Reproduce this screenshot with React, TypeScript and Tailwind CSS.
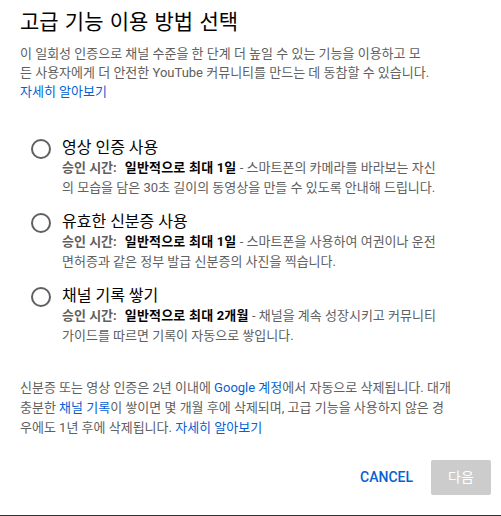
import React from "react";

const font = { fontFamily: 'Roboto, "Noto Sans CJK KR", sans-serif' };

function Radio() {
  return <div className="mt-[1px] h-[20px] w-[20px] shrink-0 rounded-full border-2 border-[#606060]" />;
}

function Option({ title, time, lines }: { title: string; time: string; lines: string[] }) {
  return (
    <div className="flex">
      <Radio />
      <div className="ml-[11px]">
        <div className="whitespace-nowrap text-[16px] leading-[20px] text-[#030303]">{title}</div>
        <div className="whitespace-nowrap text-[13px] leading-[20px] text-[#606060]">
          <span className="font-bold">승인 시간:</span>
          <span className="ml-[8px] font-bold text-[#030303] [letter-spacing:0.2px]">{time}</span> {lines[0]}
          <br />
          {lines[1]}
        </div>
      </div>
    </div>
  );
}

export default function App() {
  return (
    <div className="h-[516px] w-[501px] bg-[#303030]" style={font}>
      <div className="flex h-[515px] w-[501px] flex-col bg-white">
        <div className="px-5 pt-[9px]">
          <h1 className="whitespace-nowrap text-[21px] font-normal leading-[26px] text-[#030303] [word-spacing:1px]">
            고급 기능 이용 방법 선택
          </h1>
          <p className="mt-[9px] whitespace-nowrap text-[13px] leading-[19px] text-[#606060]">
            이 일회성 인증으로 채널 수준을 한 단계 더 높일 수 있는 기능을 이용하고 모
            <br />
            든 사용자에게 더 안전한 YouTube 커뮤니티를 만드는 데 동참할 수 있습니다.
            <br />
            <span className="text-[#065fd4]">자세히 알아보기</span>
          </p>
        </div>
        <div className="mt-[37px] flex flex-col gap-[14px] pl-[31px]">
          <Option
            title="영상 인증 사용"
            time="일반적으로 최대 1일"
            lines={[
              "- 스마트폰의 카메라를 바라보는 자신",
              "의 모습을 담은 30초 길이의 동영상을 만들 수 있도록 안내해 드립니다.",
            ]}
          />
          <Option
            title="유효한 신분증 사용"
            time="일반적으로 최대 1일"
            lines={["- 스마트폰을 사용하여 여권이나 운전", "면허증과 같은 정부 발급 신분증의 사진을 찍습니다."]}
          />
          <Option
            title="채널 기록 쌓기"
            time="일반적으로 최대 2개월"
            lines={["- 채널을 계속 성장시키고 커뮤니티", "가이드를 따르면 기록이 자동으로 쌓입니다."]}
          />
        </div>
        <p className="mt-[32px] whitespace-nowrap px-5 text-[13px] leading-[20px] text-[#606060]">
          신분증 또는 영상 인증은 2년 이내에 <span className="text-[#065fd4]">Google 계정</span>에서 자동으로 삭제됩니다. 대개
          <br />
          충분한 <span className="text-[#065fd4]">채널 기록</span>이 쌓이면 몇 개월 후에 삭제되며, 고급 기능을 사용하지 않은 경
          <br />
          우에도 1년 후에 삭제됩니다. <span className="text-[#065fd4]">자세히 알아보기</span>
        </p>
        <div className="mt-[22px] flex items-center justify-end gap-[8px] pr-[10px]">
          <button className="h-[35px] px-[10px] text-[14px] font-medium uppercase text-[#065fd4]">Cancel</button>
          <button className="h-[35px] w-[60px] rounded-[2px] bg-[#cccccc] text-[14px] text-white">다음</button>
        </div>
      </div>
    </div>
  );
}
